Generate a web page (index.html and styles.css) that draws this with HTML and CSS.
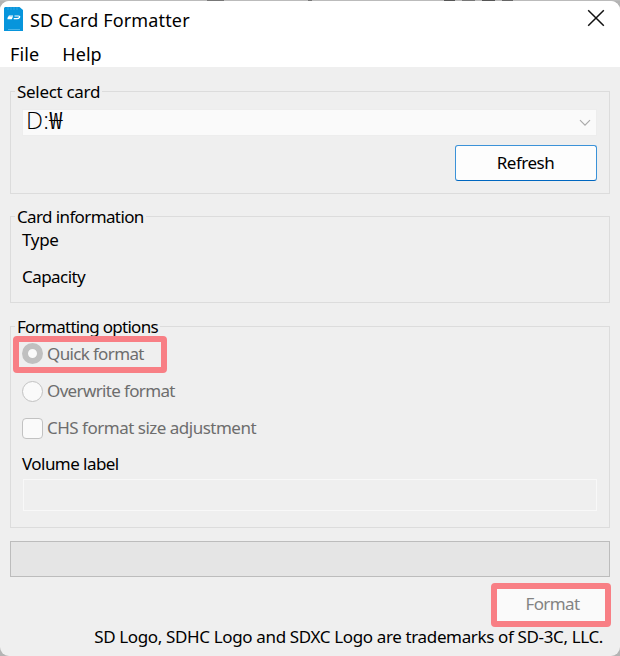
FILE: index.html
```
<!DOCTYPE html>
<html lang="en">
<head>
<meta charset="utf-8">
<title>SD Card Formatter</title>
<link rel="stylesheet" href="styles.css">
</head>
<body>
<div class="backdrop"></div>
<main class="window">
  <header class="titlebar">
    <svg class="logo" width="20" height="26" viewBox="0 0 20 26">
      <path d="M0 2l1-1h14.500L19 4v21H0z" fill="#0795dc"/>
      <path d="M4 1v3M7 1v3M10 1v3M13 1v3" stroke="#2ba5e2" stroke-width="1"/>
      <path d="M9 10H5.300l-.8 1.300h3.500l-.6 1.400H3.500M10.500 10h3.800q2 0 1.200 1.400-.7 1.300-2.500 1.300H9.700" fill="none" stroke="#fff" stroke-width="1.200"/>
      <path d="M4 23.500h12" stroke="#4bb5e8" stroke-width="1"/>
    </svg>
    <h1 class="title">SD Card Formatter</h1>
    <svg class="close" width="18" height="18" viewBox="0 0 18 18"><path d="M1.200 1.200l15.600 15.600M16.800 1.200L1.200 16.800" stroke="#111" stroke-width="1.500"/></svg>
  </header>
  <nav class="menu"><span class="file">File</span><span class="help">Help</span></nav>
  <div class="content">
    <section class="group select-card">
      <h2 class="legend l-select">Select card</h2>
      <div class="combo"><span class="drive">D:₩</span>
        <svg width="12" height="8" viewBox="0 0 12 8"><path d="M1 1.200l5 5 5-5" fill="none" stroke="#aaa" stroke-width="1.200"/></svg>
      </div>
      <button class="refresh">Refresh</button>
    </section>
    <section class="group info">
      <h2 class="legend l-info">Card information</h2>
      <p class="row type">Type</p>
      <p class="row capacity">Capacity</p>
    </section>
    <section class="group options">
      <h2 class="legend l-options">Formatting options</h2>
      <div class="option quick"><i class="radio checked"></i><span>Quick format</span><b class="mark"></b></div>
      <div class="option overwrite"><i class="radio"></i><span>Overwrite format</span></div>
      <div class="option chs"><i class="check"></i><span>CHS format size adjustment</span></div>
      <p class="row volume">Volume label</p>
      <div class="field"></div>
    </section>
    <div class="progress"></div>
    <button class="format">Format</button>
    <footer class="note">SD Logo, SDHC Logo and SDXC Logo are trademarks of SD-3C, LLC.</footer>
  </div>
</main>
</body>
</html>
```
FILE: styles.css
```
* { box-sizing: border-box; }
body {
  margin: 0;
  width: 620px;
  height: 656px;
  overflow: hidden;
  background: #b4b4b4;
  color: #000;
  font: 17px/22px "Noto Sans", "Noto Sans CJK KR", sans-serif;
  letter-spacing: -0.3px;
}
h1, h2, p { margin: 0; font-weight: 400; }
.backdrop {
  height: 1px;
  background: linear-gradient(90deg, #bbb 207px, #777 207px 224px, #bbb 224px 308px, #777 308px 312px, #bbb 312px 444px, #555 444px 455px, #bbb 455px 462px, #777 462px 475px, #bbb 475px 482px, #555 482px 495px, #bbb 495px 502px, #666 502px 513px, #bbb 513px);
}
.window {
  height: 655px;
  overflow: hidden;
  border-radius: 9px;
  background: #efefef;
}
.titlebar {
  display: flex;
  align-items: flex-start;
  height: 39px;
  padding: 5px 15px 0 4px;
  background: #fff;
}
.title {
  flex: 1;
  margin: 2px 0 0 6px;
  font-size: 18px;
  line-height: 24px;
  letter-spacing: 0.15px;
}
.close { margin-top: 3px; }
.menu {
  display: flex;
  gap: 23px;
  height: 27px;
  padding: 1px 10px 0;
  background: #fff;
  font-size: 18px;
  line-height: 26px;
  letter-spacing: 0.1px;
}
.help { letter-spacing: 0.1px; }
.content { padding: 24px 10px 0; }
.group {
  display: flex;
  flex-direction: column;
  align-items: flex-start;
  padding: 0 12px 0 11px;
  border: 1px solid #dcdcdc;
}
.legend {
  height: 22px;
  margin: -11px 0 0 -7px;
  padding: 0 2px;
  background: #efefef;
  font-size: 17px;
  white-space: nowrap;
}
.l-info { letter-spacing: -0.62px; }
.l-options { letter-spacing: -0.72px; }
.select-card { height: 103px; }
.combo {
  display: flex;
  align-items: center;
  justify-content: space-between;
  align-self: stretch;
  height: 27px;
  margin-top: 6px;
  padding: 0 5px 0 3px;
  border: 1px solid #ededed;
  background: #fafafa;
}
.drive {
  margin-top: -5px;
  font-family: "Open Sans", "Noto Sans CJK KR", sans-serif;
  font-size: 24px;
  font-weight: 350;
  line-height: 24px;
  letter-spacing: 0.3px;
}
button { padding: 0; color: inherit; font: inherit; letter-spacing: inherit; }
.refresh {
  align-self: flex-end;
  width: 142px;
  height: 36px;
  margin-top: 9px;
  padding-right: 1px;
  border: 1px solid #3b92d8;
  border-bottom-color: #0067c0;
  border-radius: 3px;
  background: #fdfdfd;
  letter-spacing: -0.5px;
}
.info { height: 87px; margin-top: 22px; }
.type { margin-top: 1px; }
.capacity { margin-top: 15px; letter-spacing: -0.55px; }
.options { height: 202px; margin-top: 23px; }
.option {
  position: relative;
  display: flex;
  align-items: center;
  gap: 4px;
  height: 22px;
  color: #6d6d6d;
}
.quick { margin-top: 5px; letter-spacing: -0.65px; }
.overwrite { margin-top: 15px; letter-spacing: -0.65px; }
.chs { margin-top: 15px; letter-spacing: -0.5px; }
.radio, .check {
  width: 21px;
  height: 21px;
  border: 1px solid #c2c2c2;
  border-radius: 50%;
  background: #fafafa;
}
.check { border-radius: 4px; }
.checked { margin-top: -1px; border: 6px solid #c0c0c0; }
.mark {
  position: absolute;
  left: -9px;
  top: -7px;
  width: 154px;
  height: 37px;
  border: 6px solid #f87f85;
  border-radius: 4px;
}
.volume { margin-top: 14px; letter-spacing: -0.55px; }
.field {
  align-self: stretch;
  height: 32px;
  margin: 4px 0 0 1px;
  border: 1px solid #f8f8f8;
}
.progress {
  height: 36px;
  margin-top: 13px;
  border: 1px solid #bcbcbc;
  background: #e5e5e5;
}
.format {
  display: block;
  width: 120px;
  height: 44px;
  margin: 6px -1px 0 auto;
  padding: 0 0 2px 3px;
  border: 6px solid #f87f85;
  border-radius: 4px;
  background: #fafafa;
  color: #838383;
  letter-spacing: -0.6px;
}
.note {
  margin: -1px 7px 0 0;
  text-align: right;
  white-space: nowrap;
  letter-spacing: -0.36px;
}
```
